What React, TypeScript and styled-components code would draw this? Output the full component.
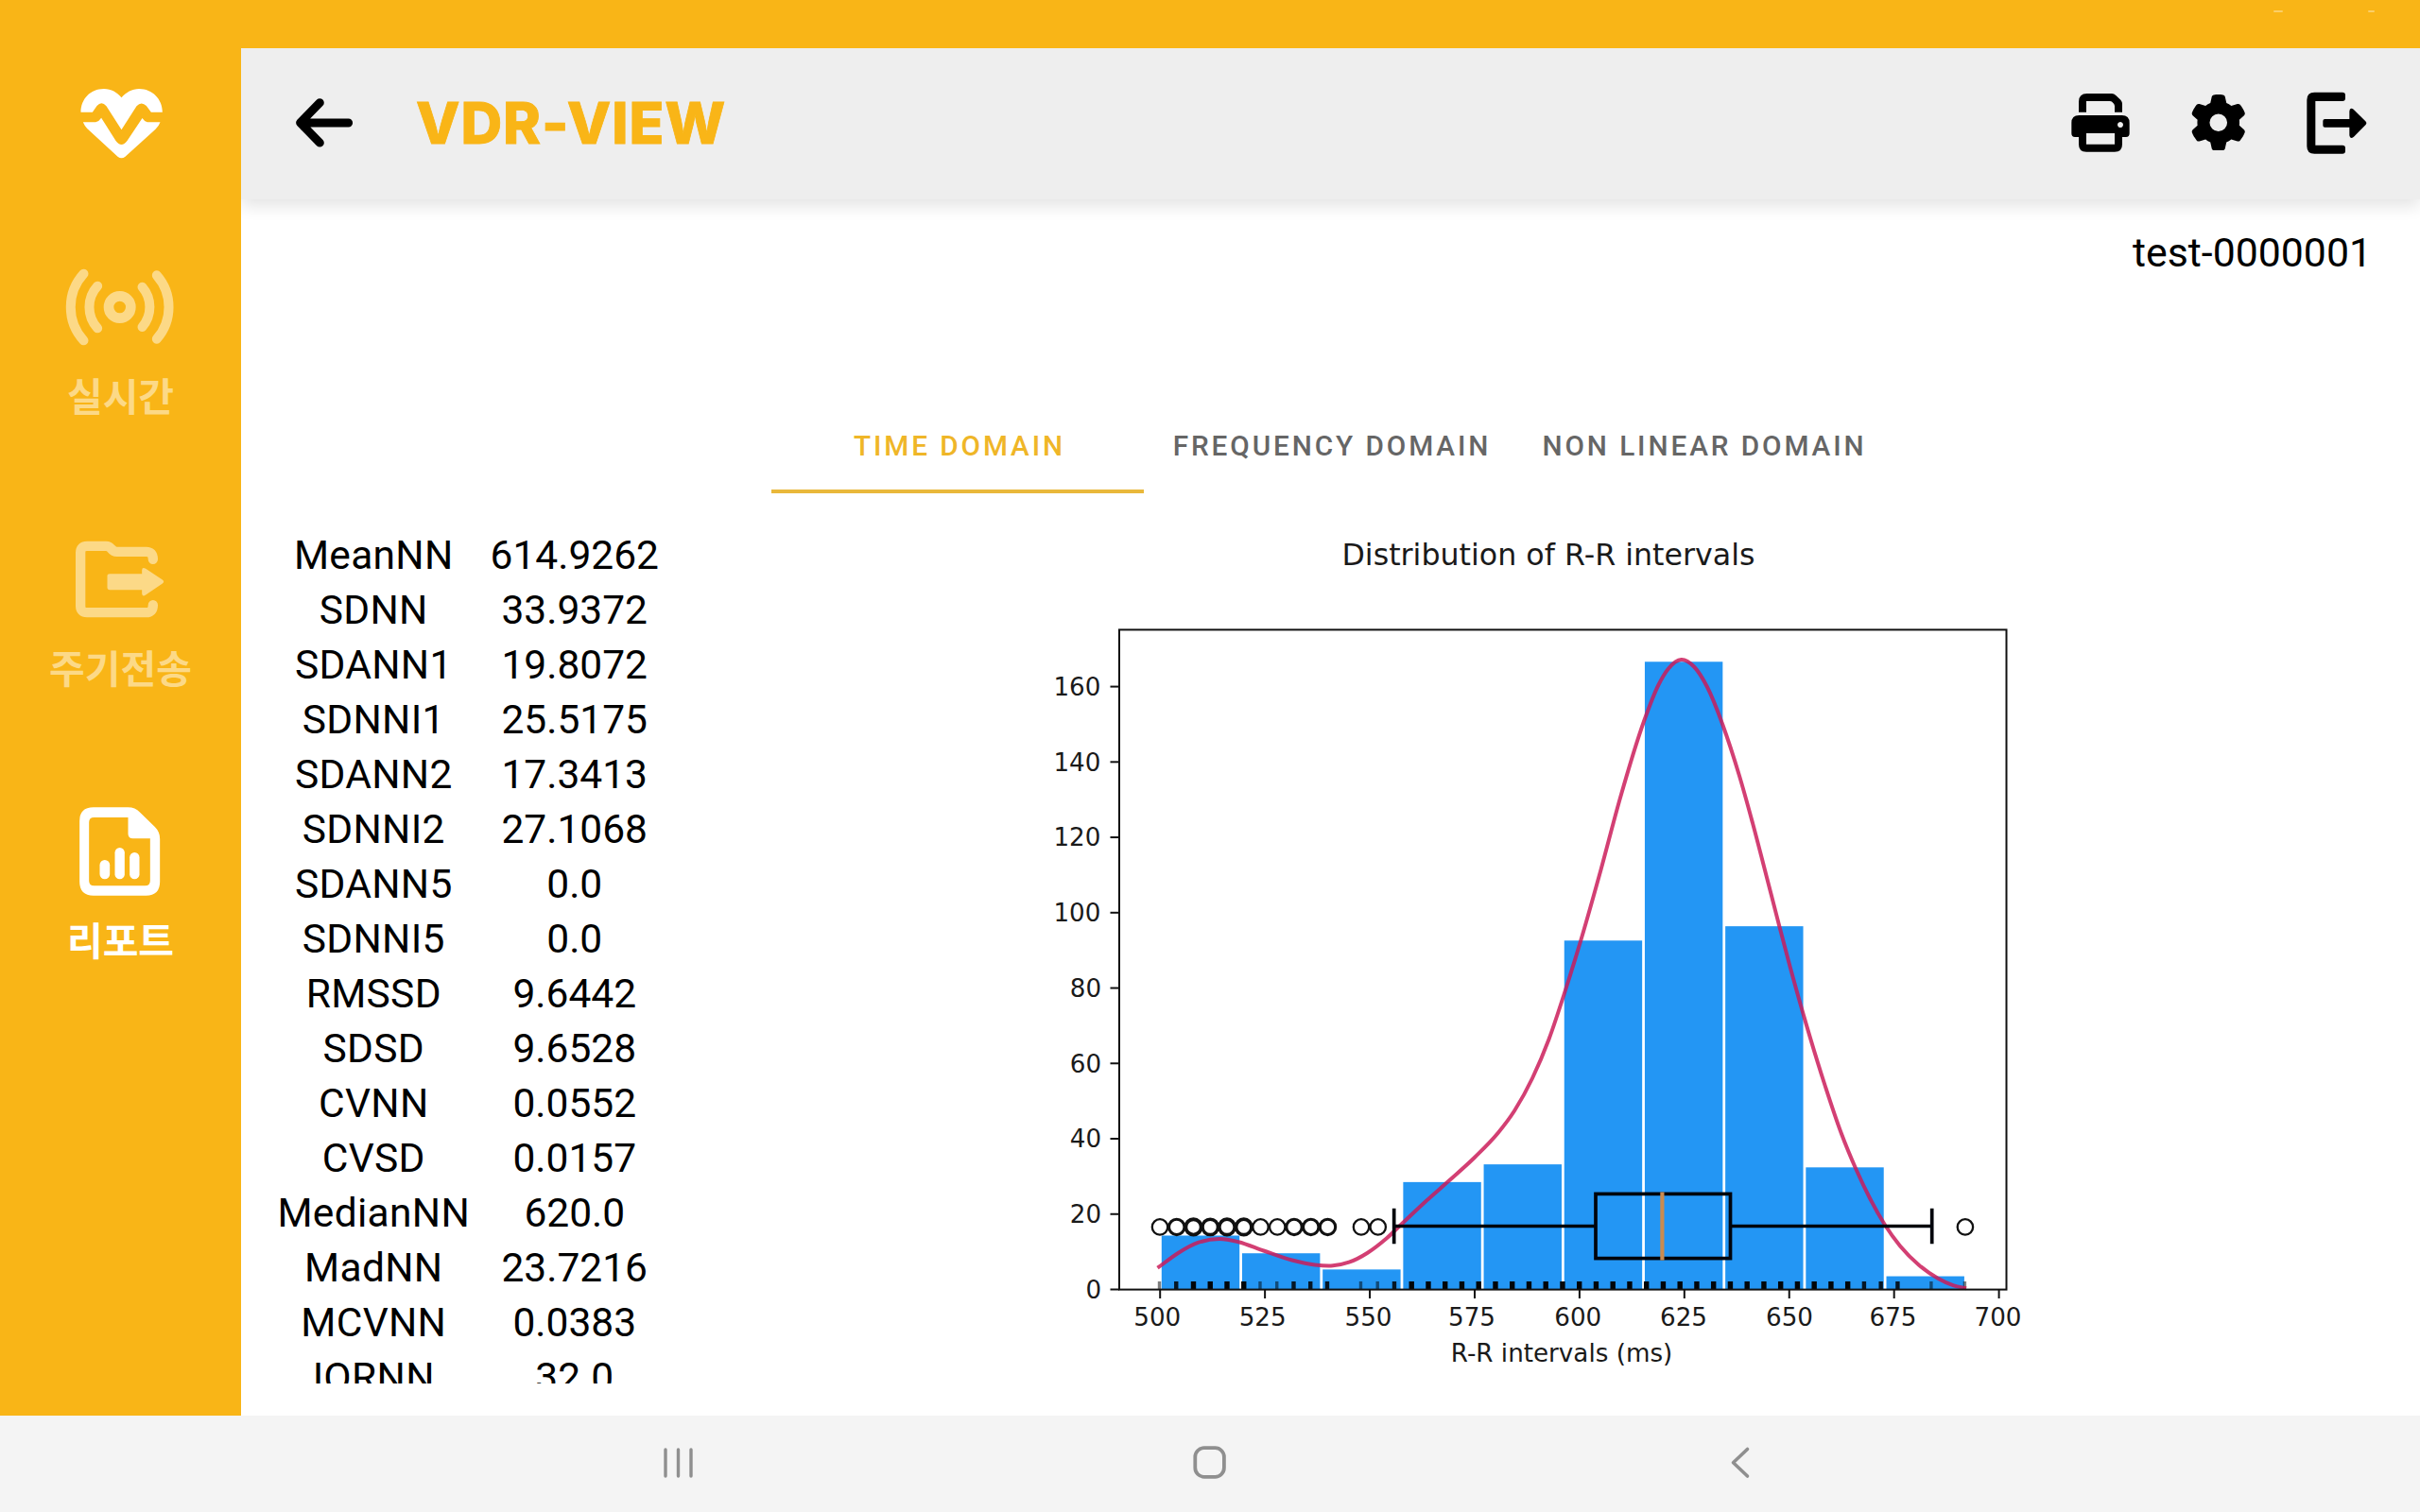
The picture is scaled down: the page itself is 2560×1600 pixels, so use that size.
import React from "react";
import styled, { createGlobalStyle } from "styled-components";
import { FaGear } from "react-icons/fa6";

const AMBER = "#f9b517";

const GlobalStyle = createGlobalStyle`
  *, *::before, *::after { box-sizing: border-box; }
  body { margin: 0; background: #fff; }
`;

const Screen = styled.div`
  width: 2560px;
  height: 1600px;
  display: grid;
  grid-template-rows: 51px 1447px 102px;
  overflow: hidden;
  font-family: Roboto, "Noto Sans CJK KR", sans-serif;
  color: #000;
  background: #fff;
`;

const StatusBar = styled.div`
  background: ${AMBER};
  display: flex;
  justify-content: flex-end;
  gap: 90px;
  padding: 11px 48px 0 0;
`;

const StatusMark = styled.span<{ $width: number }>`
  width: ${(p) => p.$width}px;
  height: 2px;
  border-radius: 1px;
  background: rgba(255, 255, 255, 0.35);
`;

const Workspace = styled.div`
  display: grid;
  grid-template-columns: 255px 1fr;
  min-height: 0;
`;

const Sidebar = styled.aside`
  background: ${AMBER};
  display: flex;
  flex-direction: column;
  align-items: center;
  padding-top: 41px;
`;

const Logo = styled.svg`
  display: block;
  width: 90px;
  height: 78px;
  fill: #fff;
`;

const SideNav = styled.nav`
  display: flex;
  flex-direction: column;
  gap: 123px;
  margin-top: 105px;
`;

const SideItem = styled.a<{ $active?: boolean }>`
  display: flex;
  flex-direction: column;
  align-items: center;
  height: 165px;
  gap: 20px;
  color: ${(p) => (p.$active ? "#fff" : "#fcd987")};
`;

const SideIcon = styled.svg`
  display: block;
  width: 120px;
  height: 100px;
`;

const SideLabel = styled.span`
  font-family: "Noto Sans CJK KR", sans-serif;
  font-weight: 700;
  font-size: 41px;
  line-height: 44px;
  white-space: nowrap;
`;

const Main = styled.main`
  display: flex;
  flex-direction: column;
  overflow: hidden;
  min-width: 0;
`;

const Header = styled.header`
  flex: none;
  height: 160px;
  background: #eee;
  box-shadow: 0 7px 16px rgba(0, 0, 0, 0.11);
  display: flex;
  align-items: center;
  padding: 0 56px 3px 57px;
`;

const BackIcon = styled.svg`
  width: 62px;
  height: 54px;
`;

const Title = styled.h1`
  margin: 0 0 0 66px;
  flex: 1;
  font-family: Inter, sans-serif;
  font-weight: 850;
  font-size: 60.5px;
  line-height: 72px;
  letter-spacing: 0.9px;
  -webkit-text-stroke: 0.8px ${AMBER};
  color: ${AMBER};
`;

const Actions = styled.div`
  display: flex;
  align-items: center;
  gap: 64px;
`;

const ActionIcon = styled.svg<{ $w: number; $h: number }>`
  display: block;
  width: ${(p) => p.$w}px;
  height: ${(p) => p.$h}px;
`;

const SettingsIcon = styled(FaGear)`
  display: block;
  width: 59.5px;
  height: 59.5px;
`;

const Patient = styled.div`
  padding: 31px 51px 0 0;
  text-align: right;
  font-size: 42.8px;
  line-height: 50px;
`;

const Tabs = styled.div`
  display: grid;
  grid-template-columns: repeat(3, 394px);
  justify-content: center;
  height: 102px;
  margin-top: 128px;
  padding-right: 2px;
`;

const Tab = styled.button<{ $active?: boolean }>`
  border: 0;
  border-bottom: 4px solid ${(p) => (p.$active ? "#e9b83b" : "transparent")};
  background: none;
  padding: 6px 0 0 5px;
  font: 500 29.75px/36px Roboto, sans-serif;
  letter-spacing: 2.9px;
  white-space: nowrap;
  color: ${(p) => (p.$active ? "#efb628" : "#666")};
`;

const Report = styled.section`
  display: flex;
  height: 907px;
  margin-top: 35px;
  padding-left: 29px;
  overflow: hidden;
`;

const Metrics = styled.dl`
  margin: 0;
  padding-top: 2px;
  width: 425px;
`;

const Metric = styled.div`
  display: grid;
  grid-template-columns: 222.5px 202.5px;
  height: 58px;
  line-height: 58px;
  font-size: 42.5px;
  text-align: center;
`;

const Name = styled.dt`
  margin: 0;
  letter-spacing: 0.3px;
`;

const Value = styled.dd`
  margin: 0;
`;

const Chart = styled.svg`
  display: block;
  flex: none;
  width: 1211px;
  height: 908px;
  margin-left: 323px;
  font-family: "DejaVu Sans", sans-serif;
  font-size: 26.2px;
  fill: #1a1a1a;
`;

const NavBar = styled.nav`
  background: #f4f4f4;
  display: grid;
  grid-template-columns: repeat(3, 562px);
  justify-content: center;
  align-items: center;
  justify-items: center;
  padding-bottom: 3px;
`;

const NavIcon = styled.svg`
  display: block;
  width: 44px;
  height: 44px;
  fill: none;
  stroke: #8f8f8f;
  stroke-linecap: round;
  stroke-linejoin: round;
`;

const METRICS: [string, string][] = [
  ["MeanNN", "614.9262"],
  ["SDNN", "33.9372"],
  ["SDANN1", "19.8072"],
  ["SDNNI1", "25.5175"],
  ["SDANN2", "17.3413"],
  ["SDNNI2", "27.1068"],
  ["SDANN5", "0.0"],
  ["SDNNI5", "0.0"],
  ["RMSSD", "9.6442"],
  ["SDSD", "9.6528"],
  ["CVNN", "0.0552"],
  ["CVSD", "0.0157"],
  ["MedianNN", "620.0"],
  ["MadNN", "23.7216"],
  ["MCVNN", "0.0383"],
  ["IQRNN", "32.0"],
];

// Tick values with the centre of each label.
const X_TICKS: [number, number][] = [
  [500, 1224.3], [525, 1335.7], [550, 1447.5], [575, 1557], [600, 1669.3],
  [625, 1781], [650, 1893], [675, 2002.5], [700, 2113.5],
];
const Y_TICKS = [0, 20, 40, 60, 80, 100, 120, 140, 160];
const BINS = [14.3, 9.6, 5.3, 28.5, 33.2, 92.6, 166.6, 96.4, 32.4, 3.5];

// Outlier positions with the stroke width that their overlapping samples build up.
const OUTLIERS: [number, number][] = [
  [500, 2.3], [504, 3.1], [508, 3.9], [512, 3.5], [516, 3.7], [520, 3.7], [524, 2.3],
  [528, 2.3], [532, 3.1], [536, 3.1], [540, 3.1], [548, 2.3], [552, 2.3], [692, 2.3],
];

const MISSING = [544, 680, 688];
const FAINT = [500, 524, 528, 548, 552, 684, 692];
const MEDIUM = [504, 532, 536, 540, 556, 668, 672, 676];
const RUG = Array.from({ length: 49 }, (_, i) => 500 + i * 4).filter((v) => !MISSING.includes(v));

const px = (v: number) => 1227.2 + 4.437 * (v - 500);
const py = (v: number) => 1364.5 - 3.987 * v;

const DENSITY: [number, number][] = [
  [1224.5, 1341.7], [1246.7, 1325.7], [1268, 1314.7], [1290, 1311], [1310, 1314.2], [1336.7, 1323.5],
  [1366.7, 1333.5], [1391, 1338.5], [1410, 1339.3], [1427, 1335.7], [1446.7, 1325.7], [1466.7, 1310.5],
  [1484.3, 1293.8], [1508, 1271.5], [1533.3, 1249], [1560, 1224.7], [1585, 1198.5], [1602, 1175.5],
  [1621, 1141], [1638.6, 1099.5], [1654.3, 1053], [1672.9, 993], [1693.6, 920], [1713.2, 847],
  [1739.3, 762.5], [1754.3, 725], [1765, 707.5], [1778.6, 698], [1792, 705.5], [1806, 727],
  [1822, 766], [1840, 821], [1854.3, 872], [1868.6, 927], [1882, 979], [1893.6, 1023],
  [1907, 1071], [1915, 1098.3], [1931, 1150], [1947.7, 1199], [1963.3, 1237], [1978.3, 1268.5],
  [1994, 1296.3], [2010, 1318.5], [2030, 1338.7], [2050, 1352.7], [2066.7, 1360.3], [2080, 1363.3],
];

// Cubic Hermite curve whose slope at each knot weighs both neighbouring segments by their length.
function smooth(points: [number, number][]): string {
  const last = points.length - 1;
  const seg = (i: number) => (points[i + 1][1] - points[i][1]) / (points[i + 1][0] - points[i][0]);
  const slopes = points.map((p, i) => {
    if (i === 0) return seg(0);
    if (i === last) return seg(last - 1);
    const before = p[0] - points[i - 1][0];
    const after = points[i + 1][0] - p[0];
    return (seg(i - 1) * after + seg(i) * before) / (before + after);
  });
  let d = `M${points[0][0]} ${points[0][1]}`;
  for (let i = 0; i < last; i++) {
    const [x0, y0] = points[i];
    const [x1, y1] = points[i + 1];
    const h = (x1 - x0) / 3;
    d += `C${(x0 + h).toFixed(1)} ${(y0 + h * slopes[i]).toFixed(1)} ${(x1 - h).toFixed(1)} ${(y1 - h * slopes[i + 1]).toFixed(1)} ${x1} ${y1}`;
  }
  return d;
}

function DistributionChart() {
  return (
    <Chart viewBox="1032 557 1211 908">
      <text x="1638" y="597.5" fontSize="31.7" textAnchor="middle">
        Distribution of R-R intervals
      </text>
      {BINS.map((v, i) => (
        <rect key={i} x={px(500 + 19.2 * i) + 1.6} y={py(v)} width={82.4} height={1364.5 - py(v)} fill="#2396f4" />
      ))}
      {RUG.map((v) => {
        const faint = FAINT.includes(v);
        const medium = MEDIUM.includes(v);
        return (
          <rect
            key={v}
            x={px(v) - (faint ? 2.4 : 2.9)}
            y={1356}
            width={faint ? 3.4 : medium ? 4.4 : 5.4}
            height={8.5}
            fill="#000"
            opacity={faint ? 0.5 : medium ? 0.85 : 0.97}
          />
        );
      })}
      <path d={smooth(DENSITY)} fill="none" stroke="#cb1a58" strokeOpacity="0.84" strokeWidth="4" />
      <g fill="none" stroke="#00040c" strokeWidth="3.7">
        <path d={`M${px(556) - 1} 1297.5H1688M1830.5 1297.5H2043.7`} />
        <path d={`M${px(556) - 1} 1278.7V1316.3M2043.7 1278.7V1316.3`} />
        <rect x="1688" y="1263.4" width="142.5" height="68.2" />
      </g>
      <path d="M1758.4 1261.5V1333.6" stroke="#ca8b50" strokeWidth="4.2" />
      <g fill="none" stroke="#111">
        {OUTLIERS.map(([v, w]) => (
          <circle key={v} cx={px(v) - 0.2} cy="1298.4" r="8.2" strokeWidth={w} />
        ))}
      </g>
      <g fill="none" stroke="#111" strokeWidth="2">
        <rect x="1184" y="666.4" width="938.5" height="698.2" />
        {X_TICKS.map(([v]) => (
          <path key={v} d={`M${px(v)} 1364.5V1374`} />
        ))}
        {Y_TICKS.map((v) => (
          <path key={v} d={`M1174.5 ${py(v)}H1184`} />
        ))}
      </g>
      {X_TICKS.map(([v, x]) => (
        <text key={v} x={x} y="1403.3" textAnchor="middle">
          {v}
        </text>
      ))}
      {Y_TICKS.map((v) => (
        <text key={v} x={v > 80 ? 1164.4 : 1165.2} y={py(v) + 9.4} textAnchor="end">
          {v}
        </text>
      ))}
      <text x="1652" y="1441" textAnchor="middle">
        R-R intervals (ms)
      </text>
    </Chart>
  );
}

export default function App() {
  return (
    <>
      <GlobalStyle />
      <Screen>
        <StatusBar>
          <StatusMark $width={10} />
          <StatusMark $width={7} />
        </StatusBar>
        <Workspace>
          <Sidebar>
            <Logo viewBox="127.5 36 270 234">
              <path d="M135 116C135 75 165 42 208 42C232 42 250 53 264 70C278 53 298 42 320 42C362 42 394 75 394 116H358L343 96Q327 80 312 97L264 172L216 97Q201 79 186 96L172 116Z" />
              <path d="M142 148H182Q192 146 200 134L246 207Q264 231 282 207L330 135Q338 147 346 148H387Q383 160 372 170L276 257Q264 267 252 257L155 168Q147 160 142 148Z" />
            </Logo>
            <SideNav>
              <SideItem>
                <SideIcon viewBox="82.5 585 360 300" fill="none" stroke="currentColor" strokeLinecap="round">
                  <circle cx="261.5" cy="735" r="35" strokeWidth="32" />
                  <path strokeWidth="30" d="M191 668A99 99 0 0 0 191 802M333 671A97 97 0 0 1 333 798M147 629A157 157 0 0 0 147 841M379 634A153 153 0 0 1 379 836" />
                </SideIcon>
                <SideLabel>실시간</SideLabel>
              </SideItem>
              <SideItem>
                <SideIcon viewBox="202.5 129.5 360 300" fill="currentColor">
                  <path
                    fill="none"
                    stroke="currentColor"
                    strokeWidth="31"
                    strokeLinecap="round"
                    d="M487 216Q487 192 465 192H372Q362 192 354 182Q348 174 338 174H278Q257 174 257 195V364Q257 385 278 385H465Q487 385 487 361"
                  />
                  <path d="M342 269Q342 262 350 262H452V250Q453 239 464 246L517 281Q525 287 517 293L464 329Q454 337 452 325V313H350Q342 313 342 305Z" />
                </SideIcon>
                <SideLabel>주기전송</SideLabel>
              </SideItem>
              <SideItem $active>
                <SideIcon viewBox="202.5 992 360 300" fill="currentColor">
                  <path
                    fillRule="evenodd"
                    d="M298 1002H408Q430 1002 446 1018L493 1064Q509 1080 509 1102V1238q0 44-44 44H298q-44 0-44-44V1046q0-44 44-44ZM300 1034q-16 0-16 16V1235q0 16 16 16H462q16 0 16-16V1101H423Q408 1101 408 1086V1034Z"
                  />
                  <rect x="318" y="1169" width="32" height="61" rx="16" />
                  <rect x="366" y="1130" width="31" height="100" rx="15.5" />
                  <rect x="413" y="1145" width="31" height="85" rx="15.5" />
                </SideIcon>
                <SideLabel>리포트</SideLabel>
              </SideItem>
            </SideNav>
          </Sidebar>
          <Main>
            <Header>
              <BackIcon viewBox="312 103 62 54" fill="none" stroke="#000" strokeWidth="9" strokeLinecap="round" strokeLinejoin="round">
                <path d="M338.3 108.7L317.6 129.8L338.3 151.1M321 130H368.6" />
                <path d="M322 126V134" />
              </BackIcon>
              <Title>VDR-VIEW</Title>
              <Actions>
                <ActionIcon $w={62} $h={62} viewBox="273 297 186 186">
                  <path d="M297 356V323Q297 297 323 297H402Q409 297 415 303L430 317Q435 323 435 330V356H411V337Q411 332 407 328Q402 321 396 321H321V356Z" />
                  <path
                    fillRule="evenodd"
                    d="M298 366H434q24 0 24 24V424q0 11-11 11H435V458q0 24-24 24H321q-24 0-24-24V435H285q-11 0-11-11V390q0-24 24-24ZM321 423V458H411V423ZM429 387a9 9 0 1 0 .01 0Z"
                  />
                </ActionIcon>
                <SettingsIcon />
                <ActionIcon $w={64} $h={66} viewBox="1020 292 192 198">
                  <path d="M1045 294H1134q9 0 9 9V313q0 9-9 9H1048V462H1134q9 0 9 9V480q0 9-9 9H1045q-24 0-24-24V318q0-24 24-24Z" />
                  <path d="M1078 379H1156V354Q1157 341 1169 348L1207 386Q1213 392 1207 398L1170 435Q1158 444 1156 431V405H1078Q1072 405 1072 399V385Q1072 379 1078 379Z" />
                </ActionIcon>
              </Actions>
            </Header>
            <Patient>test-0000001</Patient>
            <Tabs>
              <Tab $active>TIME DOMAIN</Tab>
              <Tab>FREQUENCY DOMAIN</Tab>
              <Tab>NON LINEAR DOMAIN</Tab>
            </Tabs>
            <Report>
              <Metrics>
                {METRICS.map(([name, value]) => (
                  <Metric key={name}>
                    <Name>{name}</Name>
                    <Value>{value}</Value>
                  </Metric>
                ))}
              </Metrics>
              <DistributionChart />
            </Report>
          </Main>
        </Workspace>
        <NavBar>
          <NavIcon viewBox="0 0 44 44" strokeWidth="3.4">
            <path d="M8 8V36M21.5 8V36M35 8V36" />
          </NavIcon>
          <NavIcon viewBox="0 0 44 44" strokeWidth="3.8">
            <rect x="6.3" y="6.2" width="30.6" height="30.6" rx="9.5" />
          </NavIcon>
          <NavIcon viewBox="0 0 44 44" strokeWidth="3.6">
            <path d="M28.5 7.5L13.5 21.8L28.5 36" />
          </NavIcon>
        </NavBar>
      </Screen>
    </>
  );
}
